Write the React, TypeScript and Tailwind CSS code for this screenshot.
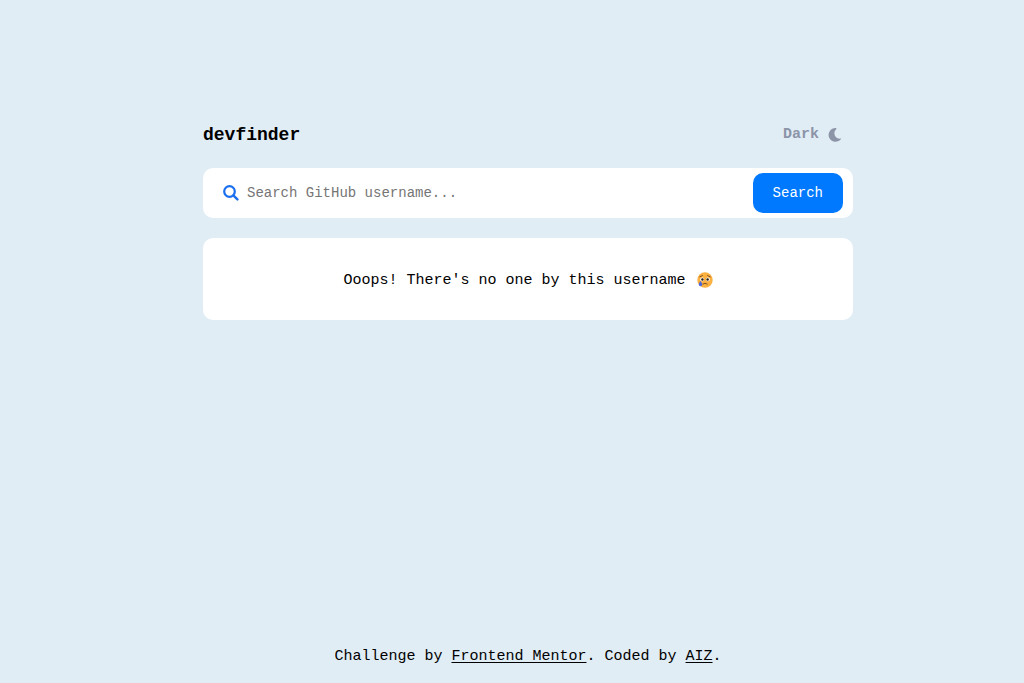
import { useState, type FormEvent } from "react";

function MoonIcon() {
  return (
    <svg viewBox="0 0 16 16" className="size-4" fill="currentColor" aria-hidden="true">
      <path d="M8.6 1A6.9 6.9 0 1 0 13.8 12.3C14.2 11.8 13.9 11.5 13.4 11.6 8.4 12.2 5.2 6.2 9.2 2.2 9.8 1.6 9.6 1.1 8.6 1Z" />
    </svg>
  );
}

function SearchIcon() {
  return (
    <svg viewBox="0 0 16 16" className="size-4" fill="none" stroke="currentColor" aria-hidden="true">
      <circle cx="6.5" cy="6.5" r="5.3" strokeWidth="2.2" />
      <path d="M10.6 10.6 14.4 14.4" strokeWidth="2.4" strokeLinecap="round" />
    </svg>
  );
}

function CryingFace() {
  return (
    <svg viewBox="0 0 16 16" className="ml-[2px] inline-block size-4 align-[-4px]" role="img" aria-label="Crying face">
      <circle cx="8" cy="8" r="7.7" fill="#fbb040" />
      <circle cx="5.1" cy="7.4" r="1.9" fill="#fff" />
      <circle cx="10.9" cy="7.4" r="1.9" fill="#fff" />
      <circle cx="5.4" cy="7.5" r="1.25" fill="#2b2118" />
      <circle cx="10.6" cy="7.5" r="1.25" fill="#2b2118" />
      <path d="M2.8 4.8 5.4 3.6M13.2 4.8 10.6 3.6M5.8 12Q8 10.3 10.2 12" fill="none" stroke="#6b4420" strokeWidth="0.9" strokeLinecap="round" />
      <path d="M3.5 9C2.4 10.6 1.8 11.6 1.8 12.6a1.7 1.7 0 0 0 3.4 0C5.2 11.6 4.6 10.6 3.5 9Z" fill="#4a68e0" />
    </svg>
  );
}

function Header() {
  return (
    <header className="flex h-10 items-center justify-between">
      <h1 className="text-lg font-bold text-black">devfinder</h1>
      <button
        type="button"
        className="flex items-center gap-2 px-2.5 text-[15px] font-bold text-[#8c94a8]"
      >
        Dark
        <MoonIcon />
      </button>
    </header>
  );
}

function SearchForm() {
  const [username, setUsername] = useState("");
  const submit = (event: FormEvent) => event.preventDefault();

  return (
    <form
      onSubmit={submit}
      className="mt-[13px] flex items-center rounded-[10px] bg-white py-[5px] pr-2.5 pl-5"
    >
      <label htmlFor="username" aria-label="GitHub username" className="text-[#1a6fee]">
        <SearchIcon />
      </label>
      <input
        id="username"
        type="text"
        value={username}
        onChange={(event) => setUsername(event.target.value)}
        placeholder="Search GitHub username..."
        className="min-w-0 flex-1 px-2 text-sm text-black outline-none placeholder:text-[#757575]"
      />
      <button
        type="submit"
        className="h-10 rounded-[10px] bg-[#0079ff] px-5 text-sm text-white"
      >
        Search
      </button>
    </form>
  );
}

export default function App() {
  return (
    <div className="flex min-h-screen flex-col bg-[#e1edf5] pl-8 font-['Liberation_Mono',monospace] text-[15px]">
      <main className="mx-auto w-full max-w-[650px] flex-1 pt-[115px]">
        <Header />
        <SearchForm />
        <section className="mt-5 rounded-[10px] bg-white px-5 pt-8 pb-7 text-center leading-[22px] text-black">
          <p>
            Ooops! There's no one by this username <CryingFace />
          </p>
        </section>
      </main>
      <footer className="pb-[15px] text-center leading-[22px] text-black">
        Challenge by{" "}
        <a href="https://www.frontendmentor.io" className="underline underline-offset-2">
          Frontend Mentor
        </a>
        . Coded by{" "}
        <a href="#aiz" className="underline underline-offset-2">
          AIZ
        </a>
        .
      </footer>
    </div>
  );
}
